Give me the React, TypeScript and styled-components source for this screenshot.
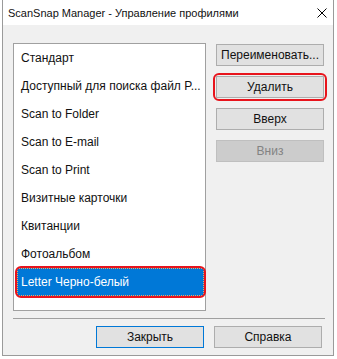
import { createGlobalStyle, styled, css } from "styled-components";

const GlobalStyle = createGlobalStyle`
  html, body {
    margin: 0;
    padding: 0;
    background: #ffffff;
  }
  body {
    font-family: "Liberation Sans", Arial, sans-serif;
    font-size: 12px;
    color: #000000;
  }
`;

const Page = styled.div`
  width: 337px;
  height: 359px;
  padding-left: 2px;
  box-sizing: border-box;
`;

const Window = styled.div`
  width: 332px;
  height: 356px;
  box-sizing: border-box;
  border: 1px solid #9a9a9a;
  border-top: none;
  background: #f0f0f0;
  display: flex;
  flex-direction: column;
`;

const TitleBar = styled.div`
  height: 25px;
  background: #ffffff;
  display: flex;
  align-items: center;
  justify-content: space-between;
  padding: 0 6px 0 5px;
  flex-shrink: 0;
`;

const Title = styled.span`
  font-size: 11px;
  color: #111111;
`;

const CloseIcon = styled.svg`
  width: 10px;
  height: 10px;
`;

const Body = styled.div`
  flex: 1;
  display: flex;
  flex-direction: column;
  padding: 18px 8px 7px 10px;
`;

const Main = styled.div`
  display: flex;
  gap: 10px;
`;

const ListBox = styled.div`
  width: 193px;
  height: 268px;
  box-sizing: border-box;
  border: 1px solid #a0a0a0;
  background: #ffffff;
  padding: 0 1px 0 3px;
`;

const Row = styled.div<{ $selected?: boolean }>`
  height: 28px;
  display: flex;
  align-items: center;
  padding-left: 4px;
  white-space: nowrap;
  position: relative;
  color: #111111;
  ${(p) =>
    p.$selected &&
    css`
      background: #0078d7;
      color: #ffffff;
      outline: 1px dotted #f7a35c;
      outline-offset: -1px;
      &::after {
        content: "";
        position: absolute;
        inset: -2px -2px -2px -2px;
        border: 2px solid #e8141c;
        border-radius: 6px;
      }
    `}
`;

const Side = styled.div`
  display: flex;
  flex-direction: column;
  gap: 10px;
  padding-top: 1px;
`;

const Button = styled.div<{ $disabled?: boolean; $default?: boolean; $marked?: boolean }>`
  width: 108px;
  height: 22px;
  box-sizing: border-box;
  border: 1px solid #adadad;
  background: #e1e1e1;
  display: flex;
  align-items: center;
  justify-content: center;
  position: relative;
  white-space: nowrap;
  color: #111111;
  ${(p) =>
    p.$disabled &&
    css`
      background: #cccccc;
      border-color: #bfbfbf;
      color: #838383;
    `}
  ${(p) =>
    p.$default &&
    css`
      border-color: #0078d7;
    `}
  ${(p) =>
    p.$marked &&
    css`
      &::after {
        content: "";
        position: absolute;
        inset: -4px;
        border: 2px solid #e8141c;
        border-radius: 6px;
      }
    `}
`;

const Separator = styled.div`
  height: 1px;
  background: #a0a0a0;
  margin: 7px 0 7px 0;
`;

const Footer = styled.div`
  display: flex;
  justify-content: flex-end;
  gap: 10px;
  padding-right: 3px;
`;

const items = [
  "Стандарт",
  "Доступный для поиска файл P...",
  "Scan to Folder",
  "Scan to E-mail",
  "Scan to Print",
  "Визитные карточки",
  "Квитанции",
  "Фотоальбом",
  "Letter Черно-белый",
];

const App = () => {
  return (
    <Page>
      <GlobalStyle />
      <Window>
        <TitleBar>
          <Title>ScanSnap Manager - Управление профилями</Title>
          <CloseIcon viewBox="0 0 10 10">
            <path d="M0.5 0.5 L9.5 9.5 M9.5 0.5 L0.5 9.5" stroke="#000" strokeWidth="1" />
          </CloseIcon>
        </TitleBar>
        <Body>
          <Main>
            <ListBox>
              {items.map((item, i) => (
                <Row key={item} $selected={i === items.length - 1}>
                  {item}
                </Row>
              ))}
            </ListBox>
            <Side>
              <Button>Переименовать...</Button>
              <Button $marked>Удалить</Button>
              <Button>Вверх</Button>
              <Button $disabled>Вниз</Button>
            </Side>
          </Main>
          <Separator />
          <Footer>
            <Button $default>Закрыть</Button>
            <Button>Справка</Button>
          </Footer>
        </Body>
      </Window>
    </Page>
  );
};

export default App;
